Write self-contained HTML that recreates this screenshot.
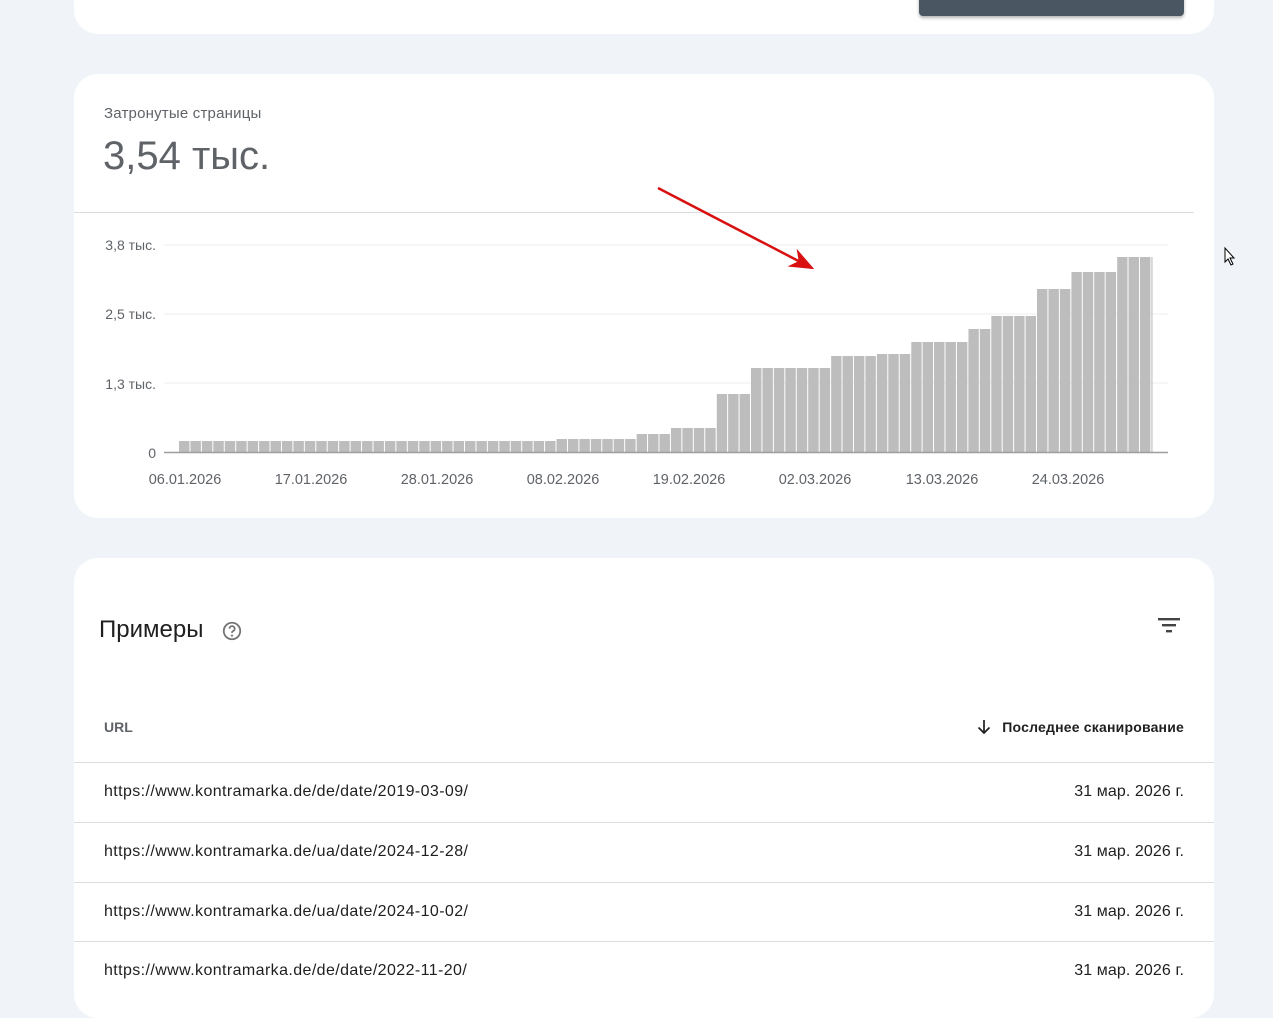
<!DOCTYPE html>
<html><head><meta charset="utf-8"><style>
*{box-sizing:border-box;margin:0;padding:0}
body{width:1273px;height:977px;overflow:hidden;background:#f0f4f9;font-family:"Liberation Sans",Roboto,sans-serif;position:relative;color:#1f1f1f}
.card{position:absolute;left:74px;width:1140px;background:#fff;border-radius:24px}
.btn{position:absolute;left:845px;top:20px;width:265px;height:36px;background:#4a5661;border-radius:4px;box-shadow:0 2px 3px rgba(0,0,0,.3)}
.row{position:absolute;left:0;width:1140px;height:60px;border-top:1px solid #dadce0;font-size:16px}
.row .u{position:absolute;left:30px;top:20px;letter-spacing:0.4px}
.row .d{position:absolute;right:30px;top:20px;letter-spacing:0.1px}
</style></head><body>
<div class="card" style="top:-40px;height:74px;">
  <div class="btn"></div>
</div>
<div class="card" style="top:74px;height:444px;">
  <div style="position:absolute;left:30px;top:31px;font-size:15px;color:#5f6368;letter-spacing:0.2px">Затронутые страницы</div>
  <div style="position:absolute;left:29px;top:60px;font-size:40px;color:#5f6368">3,54 тыс.</div>
  <div style="position:absolute;left:0;top:138px;width:1120px;height:1px;background:#dadce0"></div>
</div>
<svg style="position:absolute;left:0;top:0" width="1273" height="977">
<defs><pattern id="p" patternUnits="userSpaceOnUse" x="179" y="0" width="11.44" height="977"><rect x="0" y="0" width="10.44" height="977" fill="#bdbdbd"/></pattern>
<marker id="ah" markerWidth="10" markerHeight="8" refX="9" refY="4" orient="auto"><path d="M0,0 L10,4 L0,8 L3,4z" fill="#d81010"/></marker></defs>
<g font-size="14" fill="#5f6368" font-family="Liberation Sans,sans-serif">
<line x1="164" y1="245" x2="1168" y2="245" stroke="#ececec"/>
<line x1="164" y1="314" x2="1168" y2="314" stroke="#ececec"/>
<line x1="164" y1="383" x2="1168" y2="383" stroke="#ececec"/>
<text x="156" y="250" text-anchor="end">3,8 тыс.</text>
<text x="156" y="319" text-anchor="end">2,5 тыс.</text>
<text x="156" y="389" text-anchor="end">1,3 тыс.</text>
<text x="156" y="458" text-anchor="end">0</text>
</g>
<g fill="url(#p)">
<rect x="179" y="441" width="377.5" height="11"/>
<rect x="556.5" y="439" width="80.1" height="13"/>
<rect x="636.6" y="434" width="34.3" height="18"/>
<rect x="670.9" y="428" width="45.8" height="24"/>
<rect x="716.7" y="394" width="34.3" height="58"/>
<rect x="751" y="368" width="80.1" height="84"/>
<rect x="831.1" y="356" width="45.7" height="96"/>
<rect x="876.8" y="354" width="34.4" height="98"/>
<rect x="911.2" y="342" width="57.2" height="110"/>
<rect x="968.4" y="329" width="22.8" height="123"/>
<rect x="991.2" y="316" width="45.8" height="136"/>
<rect x="1037" y="289" width="34.3" height="163"/>
<rect x="1071.3" y="272" width="45.8" height="180"/>
<rect x="1117.1" y="257" width="35.4" height="195"/>
</g>
<line x1="164" y1="452.5" x2="1168" y2="452.5" stroke="#9e9e9e" stroke-width="1.5"/>
<g font-size="14.5" fill="#5f6368" text-anchor="middle" font-family="Liberation Sans,sans-serif">
<text x="185" y="484">06.01.2026</text><text x="311" y="484">17.01.2026</text><text x="437" y="484">28.01.2026</text><text x="563" y="484">08.02.2026</text><text x="689" y="484">19.02.2026</text><text x="815" y="484">02.03.2026</text><text x="942" y="484">13.03.2026</text><text x="1068" y="484">24.03.2026</text>
</g>
<line x1="658" y1="188" x2="812" y2="268" stroke="#d81010" stroke-width="2.5" marker-end="url(#ah)"/>
<path d="M1225,248 L1225,262 L1228,259 L1231,265 L1233,264 L1230,258 L1234,258 Z" fill="#fff" stroke="#000" stroke-width="1"/>
</svg>
<div class="card" style="top:558px;height:460px;">
  <div style="position:absolute;left:25px;top:58px;font-size:24px;color:#1f1f1f">Примеры</div>
  <svg style="position:absolute;left:147px;top:62px" width="22" height="22" viewBox="0 0 24 24"><circle cx="12" cy="12" r="9" fill="none" stroke="#757575" stroke-width="2"/><path d="M9.3,9.5a2.8,2.8 0 1 1 4,2.5c-.9.5-1.3,1-1.3,2" fill="none" stroke="#757575" stroke-width="2"/><circle cx="12" cy="17" r="1.2" fill="#757575"/></svg>
  <svg style="position:absolute;left:1083px;top:60px" width="24" height="20"><rect x="1" y="0" width="22" height="2.4" fill="#444"/><rect x="5" y="6" width="14" height="2.4" fill="#444"/><rect x="9" y="12" width="6" height="2.4" fill="#444"/></svg>
  <div style="position:absolute;left:30px;top:161px;font-size:14px;color:#5f6368;font-weight:bold">URL</div>
  <svg style="position:absolute;left:902px;top:161px" width="16" height="16" viewBox="0 0 16 16"><path d="M8,1 V14 M2.5,8.5 L8,14 L13.5,8.5" fill="none" stroke="#1f1f1f" stroke-width="1.7"/></svg>
  <div style="position:absolute;right:30px;top:161px;font-size:14px;font-weight:bold;color:#1f1f1f;letter-spacing:0.2px">Последнее сканирование</div>
  <div class="row" style="top:204px"><span class="u">https://www.kontramarka.de/de/date/2019-03-09/</span><span class="d">31 мар. 2026 г.</span></div>
  <div class="row" style="top:264px"><span class="u">https://www.kontramarka.de/ua/date/2024-12-28/</span><span class="d">31 мар. 2026 г.</span></div>
  <div class="row" style="top:324px"><span class="u">https://www.kontramarka.de/ua/date/2024-10-02/</span><span class="d">31 мар. 2026 г.</span></div>
  <div class="row" style="top:383px"><span class="u">https://www.kontramarka.de/de/date/2022-11-20/</span><span class="d">31 мар. 2026 г.</span></div>
</div>
</body></html>
